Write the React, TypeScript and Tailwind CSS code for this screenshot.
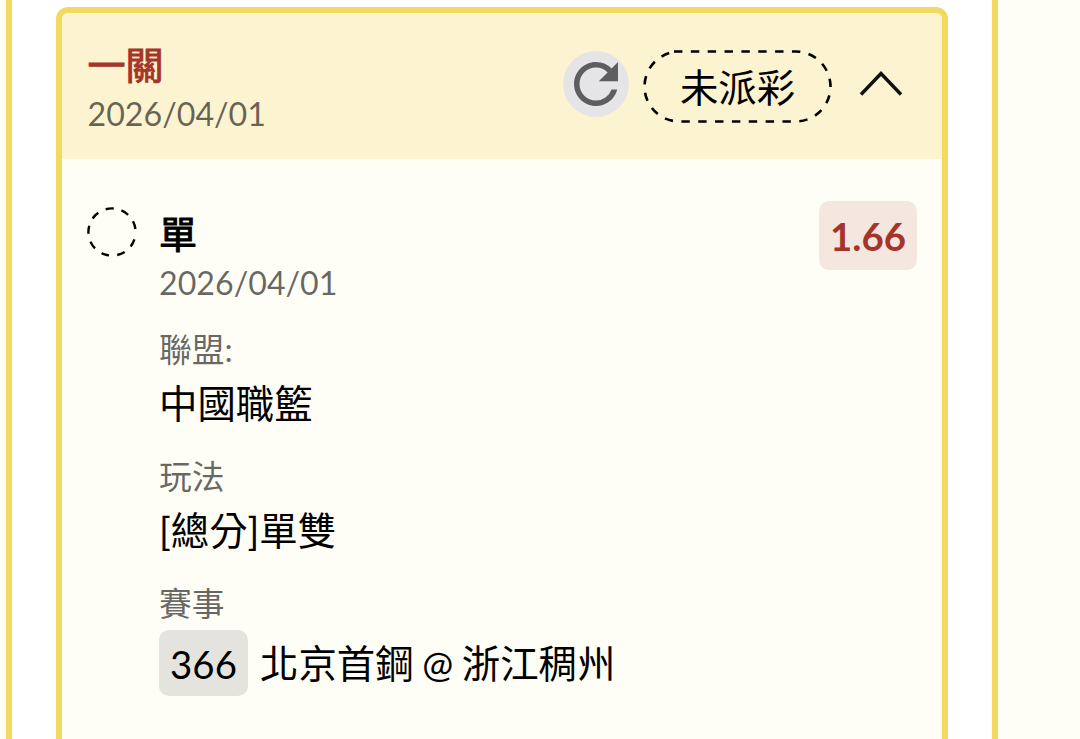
import { MdRefresh } from 'react-icons/md'

const DETAILS = [
  { label: '聯盟:', value: '中國職籃' },
  { label: '玩法', value: '[總分]單雙' },
]

function PendingRing() {
  return (
    <svg className="block h-[50px] w-[50px]" viewBox="0 0 50 50" fill="none">
      <circle
        cx="25"
        cy="25"
        r="23.6"
        stroke="#000"
        strokeWidth="2.4"
        strokeDasharray="8 8.1 8 8.1 8 8.1 8 8.1 8 8.1 8 8.1 8 8.1 8 8.1 8 100"
        transform="rotate(18.3 25 25)"
      />
    </svg>
  )
}

function StatusPill({ text }: { text: string }) {
  return (
    <div className="relative flex h-[73px] w-[189px] items-center justify-center">
      <svg className="absolute inset-0 h-full w-full" viewBox="0 0 189 73" fill="none">
        <path
          d="M31 1.5H152A35 35 0 0 1 187.5 36.5A35 35 0 0 1 152 71.5H37A35 35 0 0 1 1.5 36.5A35 35 0 0 1 31 2"
          stroke="#000"
          strokeWidth="2.6"
          strokeDasharray="8.4 8.45"
        />
      </svg>
      <span className="text-[38.4px] leading-[48px]">{text}</span>
    </div>
  )
}

export default function App() {
  return (
    <div className="h-[739px] w-[1080px] overflow-hidden bg-[#fffef6] pl-1.5 font-['Lato','Noto_Sans_CJK_TC',sans-serif] text-black">
      <div className="h-full w-[992px] border-x-[6px] border-[#f2d95f] bg-white px-11 pt-[7px]">
        <div className="h-[780px] rounded-[12px] border-[6px] border-[#f2d95f] bg-[#fffef6]">
          {/* Header */}
          <div className="flex h-[146px] items-start rounded-t-[6px] bg-[#fcf3d0] pl-[25.5px] pr-[39px]">
            <div className="flex-1 pt-[26px]">
              <div className="text-[38px] leading-[50px] text-[#a5352a] [-webkit-text-stroke:1px_#a5352a]">一關</div>
              <div className="pt-px text-[32.2px] leading-[48px] text-black/60">2026/04/01</div>
            </div>
            <div className="flex items-center pt-[37px]">
              <div className="mr-[14.5px] flex h-[66px] w-[66px] -translate-y-[3px] items-center justify-center rounded-full bg-[#e5e5e7]">
                <MdRefresh className="h-[66px] w-[66px] text-[#5e5e60]" />
              </div>
              <StatusPill text="未派彩" />
              <svg className="ml-[27px] h-[26px] w-[44px] -translate-y-[3px]" viewBox="0 0 44 26" fill="none">
                <path d="M2 23.5 22 2.5 42 23.5" stroke="#111" strokeWidth="3.4" />
              </svg>
            </div>
          </div>

          {/* Body */}
          <div className="flex items-start pl-[24.5px] pr-[25px] pt-[42px]">
            <div className="mr-[22.5px] pt-[5.5px]">
              <PendingRing />
            </div>
            <div className="flex-1">
              <div className="pt-[7px] text-[38px] leading-[50px] [-webkit-text-stroke:1px_#000]">單</div>
              <div className="pt-px text-[32.2px] leading-[48px] text-black/60">2026/04/01</div>
              {DETAILS.map(d => (
                <div key={d.label} className="mt-[19px]">
                  <div className="text-[32.8px] leading-[48px] text-black/60">{d.label}</div>
                  <div className="pb-0.5 text-[38.4px] leading-[58px]">{d.value}</div>
                </div>
              ))}
              <div className="mt-[19px]">
                <div className="text-[32.8px] leading-[48px] text-black/60">賽事</div>
                <div className="mt-0.5 flex items-center text-[38.4px]">
                  <span className="mr-3 flex h-[66px] w-[89px] items-center justify-center rounded-[10px] bg-[#e4e3dd] pt-[3px]">366</span>
                  <span className="pt-0.5 [word-spacing:-1.2px]">
                    北京首鋼 <span className="text-[37px]">@</span> 浙江稠州
                  </span>
                </div>
              </div>
            </div>
            <div className="flex h-[69px] w-[98px] items-center justify-center rounded-[10px] bg-[#f3e7e0] pt-[3px] text-[38.4px] font-bold text-[#a5352a]">
              1.66
            </div>
          </div>
        </div>
      </div>
    </div>
  )
}
